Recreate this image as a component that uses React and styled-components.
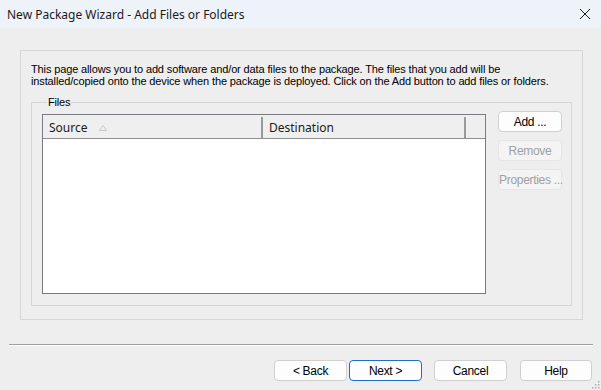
import React from 'react';
import styled, { createGlobalStyle } from 'styled-components';

const Global = createGlobalStyle`
  html, body {
    margin: 0;
    padding: 0;
    background: #eeeeee;
  }
  body {
    width: 601px;
    height: 390px;
    overflow: hidden;
  }
`;

const Window = styled.div`
  width: 601px;
  height: 390px;
  background: #eeeeee;
  display: flex;
  flex-direction: column;
  font-family: "Liberation Sans", Arial, sans-serif;
  color: #000;
  position: relative;
`;

const TitleBar = styled.div`
  height: 28px;
  background: #eef2f9;
  display: flex;
  align-items: center;
  justify-content: space-between;
  padding: 0 8px 0 7px;
  box-sizing: border-box;
`;

const Title = styled.span`
  font-family: "Noto Sans", "Open Sans", sans-serif;
  font-size: 12px;
  color: #1a1a1a;
`;

const Close = styled.svg`
  width: 12px;
  height: 12px;
  margin-right: 2px;
`;

const Panel = styled.div`
  margin: 22px 18px 0 20px;
  height: 270px;
  border: 1px solid #d6d6d6;
  box-sizing: border-box;
  padding: 13px 10px 13px 10px;
  display: flex;
  flex-direction: column;
`;

const Intro = styled.p`
  margin: 0;
  font-size: 11px;
  line-height: 11.5px;
  letter-spacing: -0.13px;
  white-space: nowrap;
`;

const GroupBox = styled.fieldset`
  margin: 9px 0 0 0;
  height: 212px;
  box-sizing: border-box;
  border: 1px solid #d6d6d6;
  padding: 6px 10px 10px 10px;
  display: flex;
  align-items: flex-start;
  gap: 12px;
  min-width: 0;
`;

const Legend = styled.legend`
  font-size: 11px;
  padding: 0 1px;
  margin-left: 5px;
  letter-spacing: -0.2px;
`;

const ListView = styled.div`
  width: 444px;
  height: 180px;
  box-sizing: border-box;
  border: 1px solid #7a7a82;
  background: #ffffff;
  display: flex;
  flex-direction: column;
`;

const Header = styled.div`
  height: 23px;
  background: #efefef;
  border-bottom: 1px solid #8f8f94;
  display: flex;
`;

const Column = styled.div`
  width: ${(p) => p.w}px;
  box-sizing: border-box;
  display: flex;
  align-items: center;
  padding-left: 6px;
  font-family: "Noto Sans", "Open Sans", sans-serif;
  font-size: 12px;
  color: #1a1a1a;
  border-right: ${(p) => (p.last ? 'none' : '2px solid #9a9a9a')};
  margin: 2px 0 0;
`;

const SortArrow = styled.svg`
  width: 8px;
  height: 6px;
  margin-left: 11px;
`;

const Side = styled.div`
  display: flex;
  flex-direction: column;
  gap: 8px;
  margin-top: -3px;
`;

const Button = styled.button`
  width: ${(p) => p.w || 64}px;
  height: 21px;
  box-sizing: border-box;
  background: ${(p) => (p.disabled ? '#f4f4f4' : '#fdfdfd')};
  border: 1px solid ${(p) => (p.primary ? '#1f6fc4' : p.disabled ? '#e6e6e6' : '#d0d0d0')};
  border-radius: 4px;
  font-family: "Liberation Sans", Arial, sans-serif;
  font-size: 12px;
  letter-spacing: -0.3px;
  color: ${(p) => (p.disabled ? '#a0a0a0' : '#000')};
  padding: 0;
  white-space: nowrap;
`;

const Separator = styled.div`
  margin: 24px 8px 0 9px;
  height: 1px;
  background: #a0a0a0;
  border-bottom: 1px solid #ffffff;
`;

const Footer = styled.div`
  display: flex;
  margin: 14px 0 0 274px;
`;

const Grip = styled.svg`
  position: absolute;
  right: 1px;
  bottom: 1px;
  width: 8px;
  height: 8px;
`;

export default function App() {
  return (
    <Window>
      <Global />
      <TitleBar>
        <Title>New Package Wizard - Add Files or Folders</Title>
        <Close viewBox="0 0 12 12">
          <path d="M1 1 L11 11 M11 1 L1 11" stroke="#1a1a1a" strokeWidth="1" fill="none" />
        </Close>
      </TitleBar>
      <Panel>
        <Intro>
          This page allows you to add software and/or data files to the package. The files that you add will be
          <br />
          installed/copied onto the device when the package is deployed. Click on the Add button to add files or folders.
        </Intro>
        <GroupBox>
          <Legend>Files</Legend>
          <ListView>
            <Header>
              <Column w={220}>
                Source
                <SortArrow viewBox="0 0 8 6">
                  <path d="M4 0.5 L7.5 5.5 L0.5 5.5 Z" stroke="#c4c4c4" strokeWidth="0.9" fill="none" />
                </SortArrow>
              </Column>
              <Column w={203}>Destination</Column>
              <Column w={19} last />
            </Header>
          </ListView>
          <Side>
            <Button>Add ...</Button>
            <Button disabled>Remove</Button>
            <Button disabled>Properties ...</Button>
          </Side>
        </GroupBox>
      </Panel>
      <Separator />
      <Footer>
        <Button w={73}>&lt; Back</Button>
        <Button w={73} primary style={{ marginLeft: 2 }}>Next &gt;</Button>
        <Button w={73} style={{ marginLeft: 12 }}>Cancel</Button>
        <Button w={72} style={{ marginLeft: 13 }}>Help</Button>
      </Footer>
      <Grip viewBox="0 0 8 8">
        <rect x="6" y="0" width="1.5" height="1.5" fill="#b0b0b0" />
        <rect x="3" y="3" width="1.5" height="1.5" fill="#b0b0b0" />
        <rect x="6" y="3" width="1.5" height="1.5" fill="#b0b0b0" />
        <rect x="0" y="6" width="1.5" height="1.5" fill="#b0b0b0" />
        <rect x="3" y="6" width="1.5" height="1.5" fill="#b0b0b0" />
        <rect x="6" y="6" width="1.5" height="1.5" fill="#b0b0b0" />
      </Grip>
    </Window>
  );
}
